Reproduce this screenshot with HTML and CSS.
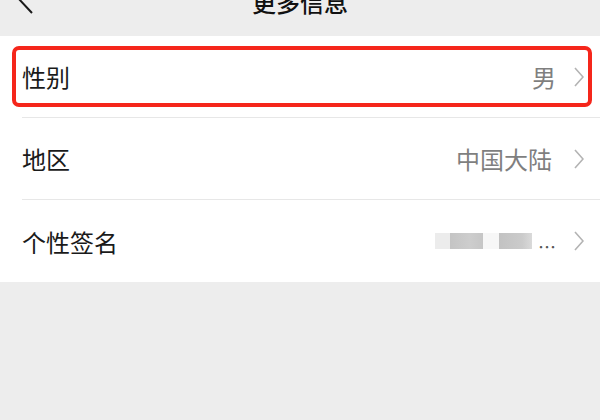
FILE: index.html
```html
<!DOCTYPE html>
<html lang="zh-CN">
<head>
<meta charset="utf-8">
<title>更多信息</title>
<link rel="stylesheet" href="styles.css">
</head>
<body>
<header class="topbar">
  <div class="back">
    <svg width="30" height="30" viewBox="0 0 30 30"><path d="M22 -1 L8 14 L22 29" fill="none" stroke="#1a1a1a" stroke-width="2"/></svg>
  </div>
  <div class="title">更多信息</div>
  <div></div>
</header>
<main class="list">
  <div class="row highlighted">
    <div class="row-inner">
      <span class="label">性别</span>
      <span class="value">男</span>
      <svg class="chev" width="10" height="20" viewBox="0 0 10 20"><path d="M1 1 L9 10 L1 19" fill="none" stroke="#b3b3b3" stroke-width="1.6"/></svg>
    </div>
  </div>
  <div class="row">
    <div class="row-inner">
      <span class="label">地区</span>
      <span class="value">中国大陆</span>
      <svg class="chev" width="10" height="20" viewBox="0 0 10 20"><path d="M1 1 L9 10 L1 19" fill="none" stroke="#b3b3b3" stroke-width="1.6"/></svg>
    </div>
  </div>
  <div class="row last">
    <div class="row-inner">
      <span class="label">个性签名</span>
      <span class="value blurred">
        <span class="blk b1"></span><span class="blk b2"></span><span class="blk gap"></span><span class="blk b3"></span><span class="dots">…</span>
      </span>
      <svg class="chev" width="10" height="20" viewBox="0 0 10 20"><path d="M1 1 L9 10 L1 19" fill="none" stroke="#b3b3b3" stroke-width="1.6"/></svg>
    </div>
  </div>
</main>
</body>
</html>
```
FILE: styles.css
```css
html, body {
  margin: 0;
  padding: 0;
}
body {
  width: 600px;
  height: 420px;
  overflow: hidden;
  background: #ededed;
  font-family: "Noto Sans CJK SC", "Noto Sans", sans-serif;
}
.topbar {
  height: 36px;
  display: grid;
  grid-template-columns: 1fr auto 1fr;
  align-items: start;
  overflow: hidden;
}
.back svg {
  display: block;
  margin-left: 10px;
  margin-top: -16px;
}
.title {
  font-size: 24px;
  line-height: 24px;
  font-weight: 500;
  color: #111;
  margin-top: -10px;
}
.list {
  background: #fff;
}
.row {
  position: relative;
  padding-left: 22px;
}
.row-inner {
  height: 81px;
  display: flex;
  align-items: center;
  padding-right: 16px;
  border-bottom: 1px solid #e7e7e7;
}
.row.last .row-inner {
  border-bottom: none;
  height: 82px;
}
.label {
  flex: 1;
  font-size: 24px;
  color: #1a1a1a;
}
.value {
  font-size: 24px;
  color: #7f7f7f;
  margin-right: 18px;
}
.row:nth-child(2) .value {
  margin-right: 22px;
}
.chev {
  display: block;
}
.highlighted::after {
  content: "";
  position: absolute;
  top: 10px;
  left: 12px;
  right: 8px;
  bottom: 11px;
  border: 4px solid #f5261b;
  border-radius: 7px;
  pointer-events: none;
}
.blurred {
  display: flex;
  align-items: center;
  height: 30px;
}
.blk {
  display: inline-block;
  height: 16px;
}
.b1 { width: 15px; background: #ececec; }
.b2 { width: 33px; background: linear-gradient(90deg, #c4c4c4, #cdcdcd 60%, #c6c6c6); }
.gap { width: 16px; background: #f7f7f7; }
.b3 { width: 33px; background: linear-gradient(90deg, #c2c2c2, #cbcbcb 70%, #dadada); }
.dots {
  font-size: 18px;
  color: #555;
  margin-left: 6px;
  line-height: 16px;
  padding-top: 10px;
}
```
